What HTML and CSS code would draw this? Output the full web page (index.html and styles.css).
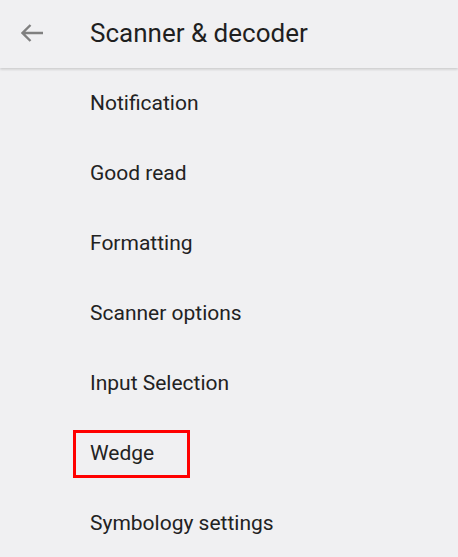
FILE: index.html
```html
<!DOCTYPE html>
<html>
<head>
<meta charset="utf-8">
<link rel="stylesheet" href="styles.css">
</head>
<body>
<header class="appbar">
  <div class="nav">
    <svg width="22" height="18" viewBox="0 0 22 18"><path d="M1.5 9H22M9.5 1L1.5 9l8 8" fill="none" stroke="#808080" stroke-width="2.4"/></svg>
  </div>
  <h1 class="title">Scanner &amp; decoder</h1>
</header>
<ul class="list">
  <li class="item">Notification</li>
  <li class="item">Good read</li>
  <li class="item">Formatting</li>
  <li class="item">Scanner options</li>
  <li class="item">Input Selection</li>
  <li class="item highlight">Wedge</li>
  <li class="item">Symbology settings</li>
</ul>
</body>
</html>
```
FILE: styles.css
```css
html, body {
  margin: 0;
  padding: 0;
  background: #f0f0f2;
  font-family: Roboto, "Noto Sans", sans-serif;
  color: #212121;
  overflow: hidden;
}
.appbar {
  height: 68px;
  display: flex;
  align-items: center;
  background: #f0f0f2;
  box-shadow: 0 1px 3px rgba(0,0,0,0.12), 0 2px 2px rgba(0,0,0,0.05);
  position: relative;
  z-index: 1;
}
.nav {
  width: 90px;
  display: flex;
  padding-left: 21px;
  box-sizing: border-box;
  margin-top: -3px;
}
.nav svg { display: block; }
.title {
  margin: 0;
  font-size: 26px;
  font-weight: 400;
  color: #1f1f1f;
  margin-top: -2px;
}
.list {
  list-style: none;
  margin: 0;
  padding: 0;
}
.item {
  height: 70px;
  display: flex;
  align-items: center;
  padding-left: 90px;
  font-size: 21px;
  color: #222;
}
.highlight {
  position: relative;
}
.highlight::after {
  content: "";
  position: absolute;
  left: 73px;
  top: 12px;
  width: 117px;
  height: 48px;
  border: 3px solid #ff0000;
  box-sizing: border-box;
}
```
